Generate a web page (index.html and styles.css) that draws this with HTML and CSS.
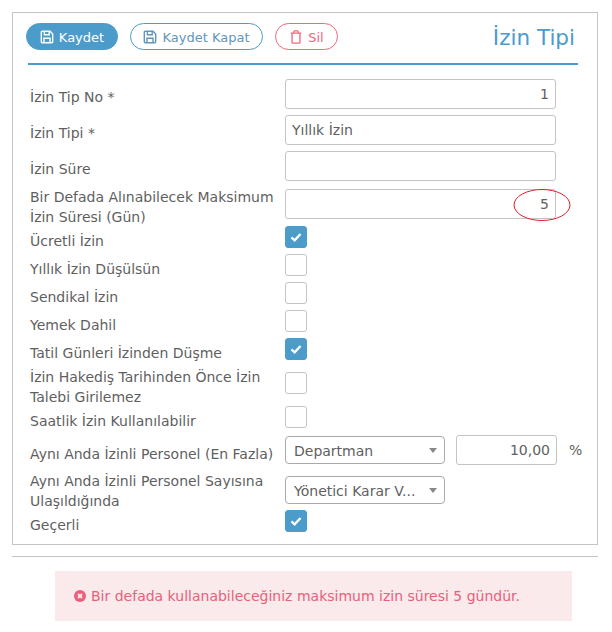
FILE: index.html
```html
<!DOCTYPE html>
<html lang="en">
<head>
  <meta charset="UTF-8">
  <meta name="viewport" content="width=device-width, initial-scale=1.0">
  <title>İzin Tipi</title>
  <link rel="stylesheet" href="styles.css">
</head>
<body>
  <div class="panel">
    <div class="toolbar">
      <button class="btn btn-primary">
        <svg class="icon" viewBox="0 0 16 16"><path d="M2.5 1.5h9l3 3v9a1 1 0 0 1-1 1h-11a1 1 0 0 1-1-1v-11a1 1 0 0 1 1-1z" fill="none" stroke="currentColor" stroke-width="1.6"/><path d="M5 2v3.5h5.5V2M4.5 14V9.5h7V14" fill="none" stroke="currentColor" stroke-width="1.6"/></svg>
        <span class="btn-text">Kaydet</span>
      </button>
      <button class="btn btn-outline">
        <svg class="icon" viewBox="0 0 16 16"><path d="M2.5 1.5h9l3 3v9a1 1 0 0 1-1 1h-11a1 1 0 0 1-1-1v-11a1 1 0 0 1 1-1z" fill="none" stroke="currentColor" stroke-width="1.6"/><path d="M5 2v3.5h5.5V2M4.5 14V9.5h7V14" fill="none" stroke="currentColor" stroke-width="1.6"/></svg>
        <span class="btn-text">Kaydet Kapat</span>
      </button>
      <button class="btn btn-danger">
        <svg class="icon" viewBox="0 0 16 16"><path d="M2 3.5h12M5.5 3.5V2a1 1 0 0 1 1-1h3a1 1 0 0 1 1 1v1.5M3.5 3.5V14a1 1 0 0 0 1 1h7a1 1 0 0 0 1-1V3.5" fill="none" stroke="currentColor" stroke-width="1.5"/></svg>
        <span class="btn-text">Sil</span>
      </button>
      <h2 class="title">İzin Tipi</h2>
    </div>

    <form class="form">
      <div class="row row-input">
        <label>İzin Tip No *</label>
        <input class="input num" type="text" value="1">
      </div>
      <div class="row row-input">
        <label>İzin Tipi *</label>
        <input class="input" type="text" value="Yıllık İzin">
      </div>
      <div class="row row-input">
        <label>İzin Süre</label>
        <input class="input" type="text">
      </div>
      <div class="row row-two row-max">
        <label>Bir Defada Alınabilecek Maksimum İzin Süresi (Gün)</label>
        <input class="input num" type="text" value="5">
        <svg class="mark" viewBox="0 0 58 34"><ellipse cx="29" cy="17" rx="28" ry="15.5" fill="none" stroke="#e2202c" stroke-width="1"/></svg>
      </div>
      <div class="row row-check">
        <label>Ücretli İzin</label>
        <span class="check on"><svg viewBox="0 0 22 22"><path d="M6 11.5l3.5 3.2 6.5-7" fill="none" stroke="#fff" stroke-width="2.6"/></svg></span>
      </div>
      <div class="row row-check">
        <label>Yıllık İzin Düşülsün</label>
        <span class="check"></span>
      </div>
      <div class="row row-check">
        <label>Sendikal İzin</label>
        <span class="check"></span>
      </div>
      <div class="row row-check">
        <label>Yemek Dahil</label>
        <span class="check"></span>
      </div>
      <div class="row row-check">
        <label>Tatil Günleri İzinden Düşme</label>
        <span class="check on"><svg viewBox="0 0 22 22"><path d="M6 11.5l3.5 3.2 6.5-7" fill="none" stroke="#fff" stroke-width="2.6"/></svg></span>
      </div>
      <div class="row row-two row-hak">
        <label>İzin Hakediş Tarihinden Önce İzin Talebi Girilemez</label>
        <span class="check"></span>
      </div>
      <div class="row row-check row-hourly">
        <label>Saatlik İzin Kullanılabilir</label>
        <span class="check"></span>
      </div>
      <div class="row row-same">
        <label>Aynı Anda İzinli Personel (En Fazla)</label>
        <div class="select">Departman<i class="caret"></i></div>
        <input class="input num input-pct" type="text" value="10,00">
        <span class="pct">%</span>
      </div>
      <div class="row row-two row-reach">
        <label>Aynı Anda İzinli Personel Sayısına Ulaşıldığında</label>
        <div class="select">Yönetici Karar V...<i class="caret"></i></div>
      </div>
      <div class="row row-check row-last">
        <label>Geçerli</label>
        <span class="check on"><svg viewBox="0 0 22 22"><path d="M6 11.5l3.5 3.2 6.5-7" fill="none" stroke="#fff" stroke-width="2.6"/></svg></span>
      </div>
    </form>
  </div>

  <hr class="rule">

  <div class="alert">
    <svg class="alert-icon" viewBox="0 0 12 12"><circle cx="6" cy="6" r="6" fill="currentColor"/><path d="M4 4l4 4M8 4l-4 4" stroke="#faeaec" stroke-width="1.8"/></svg>
    Bir defada kullanabileceğiniz maksimum izin süresi 5 gündür.
  </div>
</body>
</html>
```

FILE: styles.css
```css
body {
  margin: 0;
  padding: 12px 14px 0 12px;
  font-family: "DejaVu Sans", Verdana, sans-serif;
  font-size: 14px;
  color: #5f5f5f;
  background-color: #fff;
}
.panel {
  border: 1px solid #c4c4c4;
  height: 533px;
  box-sizing: border-box;
  padding: 10px 19px 0 13px;
}
.toolbar {
  display: flex;
  align-items: flex-start;
  height: 40px;
  margin-left: 2px;
  border-bottom: 2px solid #4b9bcb;
}
.btn {
  display: flex;
  align-items: center;
  justify-content: center;
  gap: 5px;
  flex: none;
  height: 27px;
  box-sizing: border-box;
  border-radius: 14px;
  padding: 0;
  margin-right: 12px;
  font-family: inherit;
  font-size: 13px;
  white-space: nowrap;
  background: #fff;
}
.btn-text {
  padding-top: 2px;
}
.btn-primary {
  background-color: #4b9bcb;
  border: 1px solid #4b9bcb;
  color: #fff;
  width: 92px;
  margin-left: -2px;
}
.btn-outline {
  border: 1px solid #4b9bcb;
  color: #5f96bd;
  width: 133px;
}
.btn-danger {
  border: 1px solid #f2677c;
  color: #f2677c;
  width: 63px;
}
.icon {
  width: 14px;
  height: 14px;
}
.title {
  margin: 0 0 0 auto;
  font-size: 21.5px;
  line-height: 30px;
  font-weight: normal;
  color: #4b9bcb;
  padding-right: 3px;
}
.form {
  padding: 14px 0 0 4px;
}
.row {
  display: flex;
  align-items: center;
  position: relative;
}
.row label {
  width: 255px;
  flex: none;
  line-height: 20px;
}
.row-input {
  height: 30px;
  margin-bottom: 6px;
}
.row-input label {
  padding-top: 5px;
}
.row-max {
  margin-top: 8px;
  margin-bottom: 7px;
  height: 30px;
}
.row-max label {
  padding-top: 6px;
}
.row-check {
  height: 22px;
  margin-top: 6px;
}
.row-check label {
  padding-top: 7px;
}
.row-hak {
  height: 22px;
  margin-top: 12px;
}
.row-hak label {
  padding-top: 8px;
}
.row-hourly {
  margin-top: 12px;
}
.row-same {
  height: 30px;
  margin-top: 7px;
}
.row-same label {
  padding-top: 7px;
  white-space: nowrap;
}
.row-reach {
  height: 28px;
  margin-top: 11px;
}
.row-reach label {
  padding-top: 2px;
}
.row-last {
  margin-top: 6px;
}
.input {
  flex: none;
  width: 271px;
  height: 30px;
  box-sizing: border-box;
  border: 1px solid #c4c4c4;
  border-radius: 3px;
  padding: 0 6px;
  font-family: inherit;
  font-size: 14px;
  color: #5f5f5f;
}
.num {
  text-align: right;
}
.mark {
  position: absolute;
  left: 483px;
  top: -1px;
  width: 58px;
  height: 34px;
}
.check {
  display: block;
  flex: none;
  width: 22px;
  height: 22px;
  box-sizing: border-box;
  border: 1px solid #c4c4c4;
  border-radius: 3px;
  background: #fff;
}
.check.on {
  background: #4b9bcb;
  border-color: #4b9bcb;
}
.check svg {
  display: block;
  width: 20px;
  height: 20px;
}
.select {
  position: relative;
  flex: none;
  width: 160px;
  height: 28px;
  line-height: 28px;
  box-sizing: border-box;
  border: 1px solid #a9a9a9;
  border-radius: 4px;
  padding-left: 8px;
  color: #5f5f5f;
}
.caret {
  position: absolute;
  right: 7px;
  top: 11px;
  border-left: 4px solid transparent;
  border-right: 4px solid transparent;
  border-top: 5px solid #888;
}
.input-pct {
  width: 101px;
  margin-left: 11px;
}
.pct {
  margin-left: 12px;
}
.rule {
  margin: 11px 0 0;
  border: none;
  border-top: 1px solid #c4c4c4;
}
.alert {
  display: flex;
  align-items: center;
  gap: 5px;
  margin: 14px 26px 0 43px;
  height: 50px;
  padding-left: 19px;
  background-color: #faeaec;
  color: #e9607a;
}
.alert-icon {
  width: 12px;
  height: 12px;
}
```
